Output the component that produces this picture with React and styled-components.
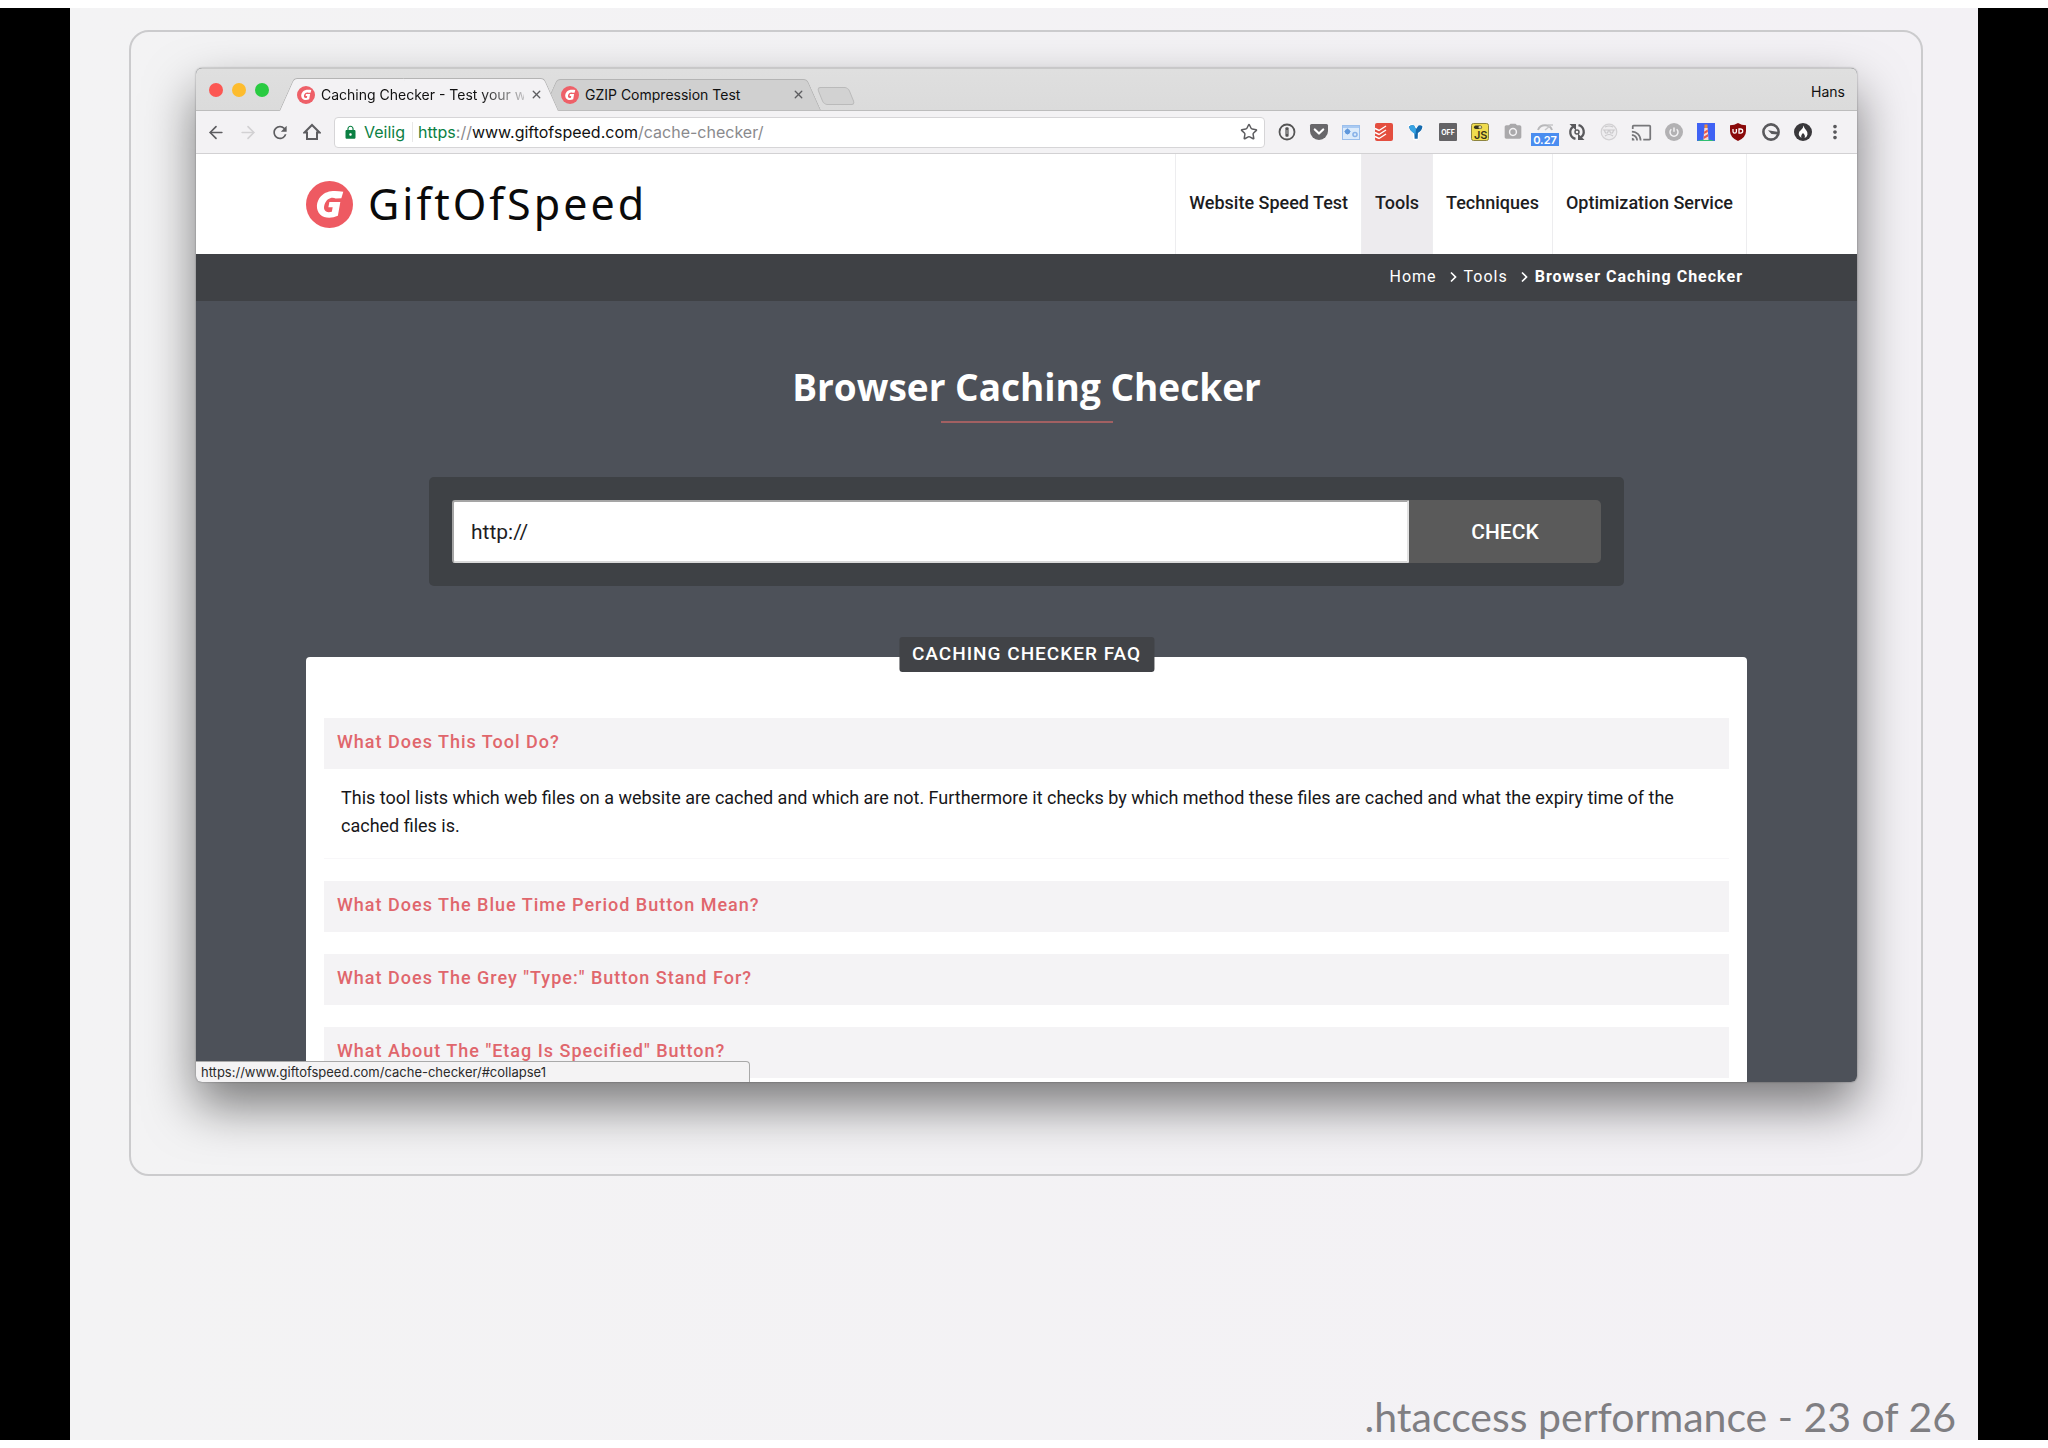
import React from "react";
import styled, { createGlobalStyle, css } from "styled-components";
import { ArrowLeft, ArrowRight, Star, X } from "lucide-react";
import { MdCameraAlt, MdCast, MdLock, MdMoreVert, MdRefresh } from "react-icons/md";

const uiFont = `Inter, "Liberation Sans", sans-serif`;
const pageFont = `Roboto, "Liberation Sans", sans-serif`;

const GlobalStyle = createGlobalStyle`
  * { box-sizing: border-box; }
  body { margin: 0; background: #fff; }
  button, input { font: inherit; }
  a { color: inherit; text-decoration: none; }
`;

/* ---------- slide ---------- */

const Deck = styled.div`
  min-height: 100vh;
  display: flex;
  padding: 8px 0;
  background: #fff;
`;

const Letterbox = styled.div`
  flex: 1;
  display: flex;
  padding: 0 70px;
  background: #000;
`;

const Slide = styled.main`
  flex: 1;
  min-width: 0;
  display: flex;
  flex-direction: column;
  justify-content: space-between;
  padding: 22px 55px 0 59px;
  background: linear-gradient(90deg, #f3f3f4, #f3f1f5);
`;

const Frame = styled.section`
  padding: 36px 64px 92px 65px;
  border: 2px solid #cbcbcd;
  border-radius: 20px;
`;

const SlideFooter = styled.footer`
  margin-right: -33px;
  text-align: right;
  font: 41px/46px Lato, "Liberation Sans", sans-serif;
  color: #7f7e82;
`;

/* ---------- browser window ---------- */

const BrowserWindow = styled.div`
  position: relative;
  overflow: hidden;
  border-radius: 6px;
  background: #4d5159;
`;

const WindowShadow = styled.div`
  border-radius: 6px;
  box-shadow: 0 24px 50px rgba(0, 0, 0, 0.5), 0 0 2px rgba(0, 0, 0, 0.4);
`;

const TabStrip = styled.div`
  display: flex;
  align-items: flex-end;
  height: 43px;
  padding: 0 12px 0 13px;
  border-top: 1px solid #c9c9c9;
  border-bottom: 1px solid #bdbdbd;
  background: linear-gradient(#dfdfdf, #dbdbdb);
  font: 14px/20px ${uiFont};
  color: #111;
`;

const Lights = styled.div`
  display: flex;
  gap: 9px;
  margin: 0 10px 13px 0;
`;

const Light = styled.button`
  width: 14px;
  height: 14px;
  padding: 0;
  border: 0;
  border-radius: 50%;
  background: ${(p) => p.$color};
`;

const tabEdge = css`
  content: "";
  position: absolute;
  z-index: -1;
  top: 0;
  bottom: 0;
  width: 50%;
  border-top: 1px solid #b4b4b4;
  background: ${(p) => (p.$active ? "#f3f2f4" : "#d0d0d0")};
`;

const Tab = styled.div`
  position: relative;
  isolation: isolate;
  z-index: ${(p) => (p.$active ? 2 : 1)};
  display: flex;
  align-items: center;
  gap: 6px;
  width: ${(p) => (p.$active ? 280 : 278)}px;
  height: ${(p) => (p.$active ? 33 : 31)}px;
  margin-bottom: ${(p) => (p.$active ? -1 : 0)}px;
  margin-left: ${(p) => (p.$active ? 0 : -16)}px;
  padding: 0 17px 0 18px;
  svg { flex: none; }
  &::before {
    ${tabEdge}
    left: 0;
    border-left: 1px solid #b4b4b4;
    border-top-left-radius: 4px;
    transform: skewX(-24deg);
    transform-origin: bottom;
  }
  &::after {
    ${tabEdge}
    right: 0;
    border-right: 1px solid #b4b4b4;
    border-top-right-radius: 4px;
    transform: skewX(24deg);
    transform-origin: bottom;
  }
`;

const TabTitle = styled.span`
  flex: 1;
  min-width: 0;
  white-space: nowrap;
  ${(p) => p.$fade && "mask-image: linear-gradient(90deg, #000 78%, transparent 106%);"}
`;

const IconButton = styled.button`
  display: flex;
  align-items: center;
  justify-content: center;
  flex: none;
  width: ${(p) => p.$size || 20}px;
  height: ${(p) => p.$size || 20}px;
  padding: 0;
  border: 0;
  background: none;
  color: ${(p) => p.$color || "#5d5d60"};
`;

const NewTab = styled.button`
  width: 32px;
  height: 18px;
  margin: 0 0 5px -1px;
  padding: 0;
  border: 1px solid #bababa;
  border-radius: 4px;
  background: #d2d2d2;
  transform: skewX(22deg);
`;

const Profile = styled.span`
  margin: 0 0 8px auto;
`;

const Toolbar = styled.div`
  display: flex;
  align-items: center;
  height: 43px;
  padding: 0 10px;
  border-bottom: 1px solid #d2d1d3;
  background: #f3f2f4;
`;

const NavButtons = styled.div`
  display: flex;
  gap: 12px;
`;

const Omnibox = styled.div`
  flex: 1;
  display: flex;
  align-items: center;
  height: 31px;
  margin: 0 10px 0 12px;
  padding: 0 6px 0 8px;
  border: 1px solid #d6d5d7;
  border-radius: 4px;
  background: #fff;
  font: 16px/20px ${uiFont};
  color: #0b8043;
`;

const Secure = styled.span`
  margin-left: 6px;
  padding-right: 7px;
  border-right: 1px solid #e8e8e8;
`;

const Url = styled.div`
  flex: 1;
  margin-left: 5px;
  outline: 0;
  color: #8a8a8d;
`;

const UrlPart = styled.span`
  color: ${(p) => p.$color};
`;

const Extensions = styled.div`
  display: flex;
  justify-content: space-between;
  width: 572px;
`;

/* ---------- site ---------- */

const SiteHeader = styled.header`
  display: flex;
  justify-content: space-between;
  height: 100px;
  padding: 0 110px;
  background: #fff;
`;

const Brand = styled.a`
  display: flex;
  align-items: center;
  gap: 15px;
  font: 43px/56px "Noto Sans", "Open Sans", sans-serif;
  letter-spacing: 3px;
  color: #0a0a0a;
`;

const Nav = styled.nav`
  display: flex;
  border-left: 1px solid #ededef;
  font: 500 18px/24px ${pageFont};
  color: #1d1d1f;
`;

const NavLink = styled.a`
  display: flex;
  align-items: center;
  padding: 0 13px 2px;
  border-right: 1px solid #ededef;
  background: ${(p) => (p.$active ? "#edebee" : "transparent")};
`;

const Breadcrumb = styled.nav`
  display: flex;
  align-items: center;
  justify-content: flex-end;
  height: 47px;
  padding: 0 114px 1px;
  background: #3f4145;
  font: 16px/24px ${pageFont};
  letter-spacing: 1px;
  color: #fff;
`;

const Crumb = styled.a`
  font-weight: ${(p) => (p.$current ? 700 : 400)};
`;

const Chevron = styled.svg`
  margin: 0 6px 0 12px;
`;

const Content = styled.div`
  padding: 60px 110px 0;
`;

const Title = styled.h1`
  display: flex;
  flex-direction: column;
  align-items: center;
  gap: 8px;
  margin: 0 0 54px;
  font: 700 37px/52px "Open Sans", "Noto Sans", sans-serif;
  color: #fff;
  &::after {
    content: "";
    width: 172px;
    height: 2px;
    background: #a26062;
  }
`;

const CheckForm = styled.form`
  display: flex;
  margin: 0 123px 71px;
  padding: 23px;
  border-radius: 5px;
  background: #3e4145;
  font: 21px/24px ${pageFont};
`;

const AddressInput = styled.input`
  flex: 1;
  min-width: 0;
  height: 63px;
  padding: 0 17px;
  border: 2px solid;
  border-color: #a5a5a5 #e2e2e2 #d9d9d9 #a5a5a5;
  border-radius: 3px 0 0 3px;
  background: #fff;
  color: #1d1d1f;
`;

const CheckButton = styled.button`
  width: 192px;
  border: 0;
  border-radius: 0 5px 5px 0;
  background: #5a5a5a;
  font-weight: 500;
  color: #fff;
`;

const FaqPanel = styled.section`
  position: relative;
  display: flex;
  flex-direction: column;
  gap: 22px;
  padding: 61px 18px 4px;
  border-radius: 4px 4px 0 0;
  background: #fff;
  font-family: ${pageFont};
`;

const FaqBadge = styled.h2`
  position: absolute;
  top: -20px;
  left: 50%;
  transform: translateX(-50%);
  margin: 0;
  padding: 5px 13px 6px;
  border-radius: 3px;
  background: #414347;
  font-size: 19px;
  font-weight: 500;
  line-height: 24px;
  letter-spacing: 1px;
  white-space: nowrap;
  color: #fff;
`;

const Question = styled.a`
  display: block;
  padding: 12px 13px 15px;
  background: #f4f3f5;
  font-size: 18px;
  font-weight: 500;
  line-height: 24px;
  letter-spacing: 1px;
  color: #e0666c;
`;

const Answer = styled.p`
  margin: 0;
  padding: 15px 17px 18px;
  border-bottom: 1px solid #f8f7f9;
  font-size: 18px;
  line-height: 28px;
  color: #17171a;
`;

const StatusBubble = styled.div`
  position: absolute;
  left: 0;
  bottom: 0;
  width: 554px;
  padding: 1px 5px;
  border: 1px solid #a9a9a9;
  border-left: 0;
  border-bottom: 0;
  border-radius: 0 4px 0 0;
  background: #f4f3f4;
  font: 13px/18px ${uiFont};
  color: #2a2a2a;
`;

/* ---------- drawings ---------- */

const GLogo = ({ size, color = "#ee5a62" }) => (
  <svg width={size} height={size} viewBox="0 0 46 46" aria-hidden="true">
    <circle cx="23" cy="23" r="23" fill={color} />
    <path
      d="M36.5 10.5 34.6 17 29 17.2c-2-1.300-5-1.200-7.400.7-3.300 2.600-4.700 7.600-3.500 10.300 1 2.300 4 2.800 7.200 1.800l.8-4.200h-4.200l1-5.300h10.700L31.200 34c-6.500 3-13.500 2.500-17.400-1.300-4.500-4.400-4-12.600.8-17.700 5.400-5.700 12.500-5.800 21.900-4.500z"
      fill="#fff"
    />
  </svg>
);

const HomeGlyph = () => (
  <svg width="18" height="18" viewBox="0 0 18 18" fill="none" stroke="currentColor" strokeWidth="2">
    <path d="M1.500 9.500 9 2l7.500 7.500H14V16H4V9.500z" strokeLinejoin="miter" />
  </svg>
);

const glyphs = {
  "1Password": (
    <>
      <circle cx="9" cy="9" r="7.500" fill="none" stroke="#555" strokeWidth="1.800" />
      <rect x="7.400" y="4.300" width="3.200" height="9.400" rx="1" fill="#555" />
      <path d="M9 7v4" stroke="#ccc" strokeWidth=".8" />
    </>
  ),
  Pocket: (
    <>
      <path d="M1.500 1h15q1.500 0 1.500 1.500V8a9 9 0 0 1-18 0V2.500Q0 1 1.500 1z" fill="#68676a" />
      <path d="m4.800 6.500 4.200 4 4.200-4" fill="none" stroke="#fff" strokeWidth="2.200" strokeLinecap="round" strokeLinejoin="round" />
    </>
  ),
  "Page settings": (
    <>
      <rect x=".5" y="2.500" width="17" height="14" fill="#dcebfb" stroke="#9bbfec" />
      <path d="M1 3h16v2H1z" fill="#a9caf2" />
      <circle cx="5.500" cy="8.500" r="1.600" fill="none" stroke="#5f98dc" strokeWidth="2" />
      <path d="M5.500 5.500v6M2.500 8.500h6" stroke="#5f98dc" strokeWidth="1.200" />
      <circle cx="13" cy="11.500" r="2" fill="none" stroke="#8ab3e8" strokeWidth="1.600" />
    </>
  ),
  Todoist: (
    <>
      <rect width="18" height="18" rx="2" fill="#e44e3f" />
      <path d="M0 5.500 4 7.500 11 3M0 9.500l4 2L11 7M0 13.500l4 2L11 11" fill="none" stroke="#fff" strokeWidth="1.400" />
    </>
  ),
  "Vimeo helper": (
    <>
      <path d="M1 2.500 6 10.500v6l3.500 1 2.500-2v-4.500l5-7.500-3.500-2L9.500 4 5 1z" fill="#fff" />
      <path d="M2 3.500Q4.500 1.500 7 2.500L9 6l2.500-3.500q2.500-.7 4 1-.8 4.500-4.600 6.500l-.2 5.700H7.600L7.300 10Q3 8 2 3.500z" fill="#1469ad" />
      <path d="M2 3.500Q4.500 1.500 7 2.500L9 6l-.5 5.500Q3 8 2 3.500z" fill="#36a3e3" />
    </>
  ),
  "Toggle off": (
    <>
      <rect width="18" height="18" rx="1" fill="#646366" />
      <text x="9" y="12" textAnchor="middle" fontFamily="Inter, sans-serif" fontWeight="700" fontSize="7" fill="#fff">OFF</text>
    </>
  ),
  "JavaScript switch": (
    <>
      <rect x=".5" y=".5" width="17" height="17" rx="2" fill="#f0dc4e" stroke="#8d8440" />
      <rect x="3" y="2.500" width="8" height="3.500" rx="1.700" fill="#38351c" />
      <rect x="7.500" y="3" width="3" height="2.500" rx="1" fill="#d8d3a0" />
      <text x="16.500" y="16" textAnchor="end" fontFamily="Inter, sans-serif" fontWeight="600" fontSize="11" fill="#38351c">JS</text>
    </>
  ),
  "Page load time": (
    <>
      <path d="M2 7a7.500 7.500 0 0 1 14 0" fill="none" stroke="#b8b8ba" strokeWidth="2" />
      <path d="m9 7 5-4M12 2h5" stroke="#c7c7c9" strokeWidth="1.500" />
      <rect x="-5" y="10" width="28" height="13" fill="#4a8df0" />
      <text x="9" y="20.500" textAnchor="middle" fontFamily="Inter, sans-serif" fontWeight="600" fontSize="11" fill="#fff">0.27</text>
    </>
  ),
  "Auto reload": (
    <>
      <path d="M5.200 3.600A6.800 6.800 0 0 0 7.500 15.800M12.800 14.400A6.800 6.800 0 0 0 10.500 2.200" fill="none" stroke="#59595c" strokeWidth="2.300" />
      <path d="M1.500 1H8v6.500zM16.500 17H10v-6.500z" fill="#59595c" />
      <circle cx="9" cy="9" r="2" fill="none" stroke="#59595c" strokeWidth="1.500" />
    </>
  ),
  Ghost: (
    <>
      <circle cx="9" cy="9" r="7.800" fill="#eeedef" stroke="#d2d1d3" strokeWidth="1.200" />
      <path d="M3 7h12M4.500 7.500l1 2.500h2l1-2.500m1 0 1 2.500h2l1-2.500M5 13q4-3 8 0M5 4q4-2 8 0" fill="none" stroke="#cac9cb" strokeWidth="1.200" />
    </>
  ),
  Power: (
    <>
      <circle cx="9" cy="9" r="9" fill="#b2b1b3" />
      <path d="M6.300 6.200a4 4 0 1 0 5.400 0M9 4.500v4.300" fill="none" stroke="#f3f2f4" strokeWidth="1.500" />
    </>
  ),
  Lighthouse: (
    <>
      <rect width="18" height="18" fill="#3f62f4" />
      <path d="M0 18q9-3.500 18 0z" fill="#2fbf71" />
      <path d="M7.300 5h3.400l.8 12h-5z" fill="#f6d9d2" />
      <path d="M7.500 1.500h3V5h-3z" fill="#f08a3c" />
      <path d="m7.200 8.500 3.600-2V9L7 11zM6.900 13.500l4.200-2.500v2.500L6.700 16z" fill="#ea5548" />
    </>
  ),
  "uBlock Origin": (
    <>
      <path d="M9 0q3.500 2.300 8 2.300V8q0 6.500-8 10-8-3.500-8-10V2.300Q5.500 2.300 9 0z" fill="#8a0a0a" />
      <path d="M4 6v2.500q0 1.700 1.700 1.700T7.400 8.500V6M10 6v4.200h1.500q2.200 0 2.200-2.100T11.500 6z" fill="none" stroke="#fff" strokeWidth="1.300" />
    </>
  ),
  Ghostery: (
    <>
      <circle cx="9" cy="9" r="7.600" fill="none" stroke="#59595c" strokeWidth="2.600" />
      <path d="M6 7.300 16.500 9v2.500L9.500 11z" fill="#59595c" />
    </>
  ),
  Flame: (
    <>
      <circle cx="9" cy="9" r="9" fill="#39383b" />
      <path d="M9.500 2.500q.5 2.500 2.500 4.500 2 2.200 1.500 4.500-.4 2.500-3 3.500 1.300-2.500-1.500-5-2.600 2.600-1.500 5-2.600-1.200-2.800-3.700Q4.600 8.500 7 7q2.300-1.700 2.500-4.500z" fill="#fff" />
    </>
  ),
};

const Glyph = ({ name }) => (
  <svg width="18" height="18" viewBox="0 0 18 18" overflow="visible" aria-hidden="true">
    {glyphs[name]}
  </svg>
);

const extensions = [
  { name: "1Password" },
  { name: "Pocket" },
  { name: "Page settings" },
  { name: "Todoist" },
  { name: "Vimeo helper" },
  { name: "Toggle off" },
  { name: "JavaScript switch" },
  { name: "Screenshot", icon: <MdCameraAlt size={20} color="#aaa9ab" /> },
  { name: "Page load time" },
  { name: "Auto reload" },
  { name: "Ghost" },
  { name: "Cast", icon: <MdCast size={21} color="#77777a" /> },
  { name: "Power" },
  { name: "Lighthouse" },
  { name: "uBlock Origin" },
  { name: "Ghostery" },
  { name: "Flame" },
  { name: "Menu", icon: <MdMoreVert size={22} color="#59595c" /> },
];

const navItems = ["Website Speed Test", "Tools", "Techniques", "Optimization Service"];

const questions = [
  {
    title: "What Does This Tool Do?",
    answer:
      "This tool lists which web files on a website are cached and which are not. Furthermore it checks by which method these files are cached and what the expiry time of the cached files is.",
  },
  { title: "What Does The Blue Time Period Button Mean?" },
  { title: 'What Does The Grey "Type:" Button Stand For?' },
  { title: 'What About The "Etag Is Specified" Button?' },
];

const CrumbArrow = () => (
  <Chevron width="9" height="12" viewBox="0 0 9 12" fill="none" stroke="#fff" strokeWidth="1.700">
    <path d="m2 1.500 4.500 4.500L2 10.500" />
  </Chevron>
);

const BrowserTab = ({ title, active }) => (
  <Tab $active={active}>
    <GLogo size={18} color="#ee6068" />
    <TabTitle $fade={active}>{title}</TabTitle>
    <IconButton $size={12} aria-label={`Close ${title}`}>
      <X size={13} strokeWidth={2.500} />
    </IconButton>
  </Tab>
);

export default function App() {
  return (
    <Deck>
      <GlobalStyle />
      <Letterbox>
        <Slide>
          <Frame>
            <WindowShadow>
              <BrowserWindow>
                <TabStrip>
                  <Lights>
                    <Light $color="#fc5753" aria-label="Close window" />
                    <Light $color="#fdbc2e" aria-label="Minimize window" />
                    <Light $color="#29cb41" aria-label="Zoom window" />
                  </Lights>
                  <BrowserTab title="Caching Checker - Test your w" active />
                  <BrowserTab title="GZIP Compression Test" />
                  <NewTab aria-label="New tab" />
                  <Profile>Hans</Profile>
                </TabStrip>

                <Toolbar>
                  <NavButtons>
                    <IconButton aria-label="Back"><ArrowLeft size={21} /></IconButton>
                    <IconButton aria-label="Forward" $color="#d2d1d3"><ArrowRight size={21} /></IconButton>
                    <IconButton aria-label="Reload"><MdRefresh size={23} /></IconButton>
                    <IconButton aria-label="Home"><HomeGlyph /></IconButton>
                  </NavButtons>
                  <Omnibox>
                    <MdLock size={15} />
                    <Secure>Veilig</Secure>
                    <Url role="textbox" aria-label="Address" contentEditable suppressContentEditableWarning>
                      <UrlPart $color="#0b8043">https</UrlPart>://
                      <UrlPart $color="#111">www.giftofspeed.com</UrlPart>/cache-checker/
                    </Url>
                    <IconButton $size={18} aria-label="Bookmark this page">
                      <Star size={18} strokeWidth={2} />
                    </IconButton>
                  </Omnibox>
                  <Extensions>
                    {extensions.map(({ name, icon }) => (
                      <IconButton key={name} $size={24} aria-label={name}>
                        {icon || <Glyph name={name} />}
                      </IconButton>
                    ))}
                  </Extensions>
                </Toolbar>

                <SiteHeader>
                  <Brand href="#home">
                    <GLogo size={47} />
                    GiftOfSpeed
                  </Brand>
                  <Nav>
                    {navItems.map((item) => (
                      <NavLink key={item} href="#nav" $active={item === "Tools"}>{item}</NavLink>
                    ))}
                  </Nav>
                </SiteHeader>

                <Breadcrumb aria-label="Breadcrumb">
                  <Crumb href="#home">Home</Crumb>
                  <CrumbArrow />
                  <Crumb href="#tools">Tools</Crumb>
                  <CrumbArrow />
                  <Crumb href="#checker" $current>Browser Caching Checker</Crumb>
                </Breadcrumb>

                <Content>
                  <Title>Browser Caching Checker</Title>
                  <CheckForm onSubmit={(e) => e.preventDefault()}>
                    <AddressInput type="text" aria-label="Website address" defaultValue="http://" />
                    <CheckButton type="submit">CHECK</CheckButton>
                  </CheckForm>
                  <FaqPanel>
                    <FaqBadge>CACHING CHECKER FAQ</FaqBadge>
                    {questions.map(({ title, answer }, i) => (
                      <div key={title}>
                        <Question href={`#collapse${i + 1}`}>{title}</Question>
                        {answer && <Answer>{answer}</Answer>}
                      </div>
                    ))}
                  </FaqPanel>
                </Content>

                <StatusBubble>https://www.giftofspeed.com/cache-checker/#collapse1</StatusBubble>
              </BrowserWindow>
            </WindowShadow>
          </Frame>
          <SlideFooter>.htaccess performance - 23 of 26</SlideFooter>
        </Slide>
      </Letterbox>
    </Deck>
  );
}
